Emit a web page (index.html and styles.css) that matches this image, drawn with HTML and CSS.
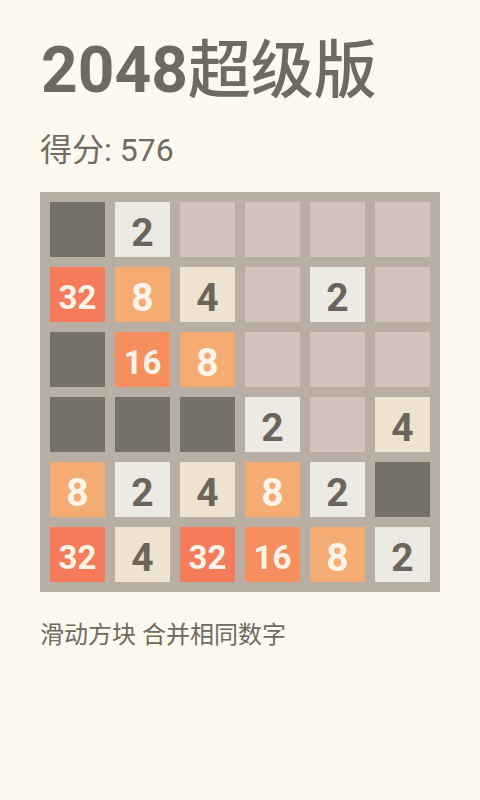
FILE: index.html
```html
<!DOCTYPE html>
<html lang="zh">
<head>
<meta charset="utf-8">
<title>2048超级版</title>
<link rel="stylesheet" href="styles.css">
</head>
<body>
<main class="page">
  <h1 class="title"><span class="title-num">2048</span><span class="title-cjk">超级版</span></h1>
  <div class="score">得分: 576</div>
  <div class="board">
    <div class="tile tx"></div>
    <div class="tile t2">2</div>
    <div class="tile t0"></div>
    <div class="tile t0"></div>
    <div class="tile t0"></div>
    <div class="tile t0"></div>

    <div class="tile t32 two">32</div>
    <div class="tile t8">8</div>
    <div class="tile t4">4</div>
    <div class="tile t0"></div>
    <div class="tile t2">2</div>
    <div class="tile t0"></div>

    <div class="tile tx"></div>
    <div class="tile t16 two">16</div>
    <div class="tile t8">8</div>
    <div class="tile t0"></div>
    <div class="tile t0"></div>
    <div class="tile t0"></div>

    <div class="tile tx"></div>
    <div class="tile tx"></div>
    <div class="tile tx"></div>
    <div class="tile t2">2</div>
    <div class="tile t0"></div>
    <div class="tile t4">4</div>

    <div class="tile t8">8</div>
    <div class="tile t2">2</div>
    <div class="tile t4">4</div>
    <div class="tile t8">8</div>
    <div class="tile t2">2</div>
    <div class="tile tx"></div>

    <div class="tile t32 two">32</div>
    <div class="tile t4">4</div>
    <div class="tile t32 two">32</div>
    <div class="tile t16 two">16</div>
    <div class="tile t8">8</div>
    <div class="tile t2">2</div>
  </div>
  <p class="hint">滑动方块 合并相同数字</p>
</main>
</body>
</html>
```

FILE: styles.css
```css
html, body {
  margin: 0;
  padding: 0;
  background: #fdf9ef;
}

body {
  font-family: Roboto, "Noto Sans CJK SC", sans-serif;
  color: #6f6a61;
}

.page {
  padding: 32px 40px 0 40px;
}

.title {
  margin: 0;
  font-size: 64px;
  line-height: 78px;
  font-weight: 700;
  color: #6e6a60;
  white-space: nowrap;
}

.title-num {
  font-weight: 700;
  margin-left: 1px;
}

.title-cjk {
  font-family: "Noto Sans CJK SC", sans-serif;
  font-weight: 500;
  font-size: 63px;
  line-height: 0;
}

.score {
  margin-top: 22px;
  font-size: 32px;
  line-height: 36px;
  color: #716c63;
}

.board {
  margin-top: 24px;
  width: 400px;
  box-sizing: border-box;
  padding: 10px;
  display: grid;
  grid-template-columns: repeat(6, 55px);
  grid-auto-rows: 55px;
  gap: 10px;
  background: #b9aea4;
}

.tile {
  box-sizing: border-box;
  height: 55px;
  padding-top: 7px;
  line-height: 48px;
  text-align: center;
  font-family: Roboto, sans-serif;
  font-weight: 700;
  font-size: 39px;
  color: #6c655c;
}

.tile.two {
  font-size: 33px;
}

.t0 { background: #d4c3bd; }
.tx { background: #767168; }
.t2 { background: #ede9e3; }
.t4 { background: #ede3d0; }
.t8 { background: #f5ac72; color: #fcf4e8; }
.t16 { background: #f58f5d; color: #fcf4e8; }
.t32 { background: #f57b5a; color: #fcf4e8; }

.hint {
  margin: 28px 0 0 0;
  font-size: 24px;
  line-height: 30px;
  color: #6f6a61;
}
```
